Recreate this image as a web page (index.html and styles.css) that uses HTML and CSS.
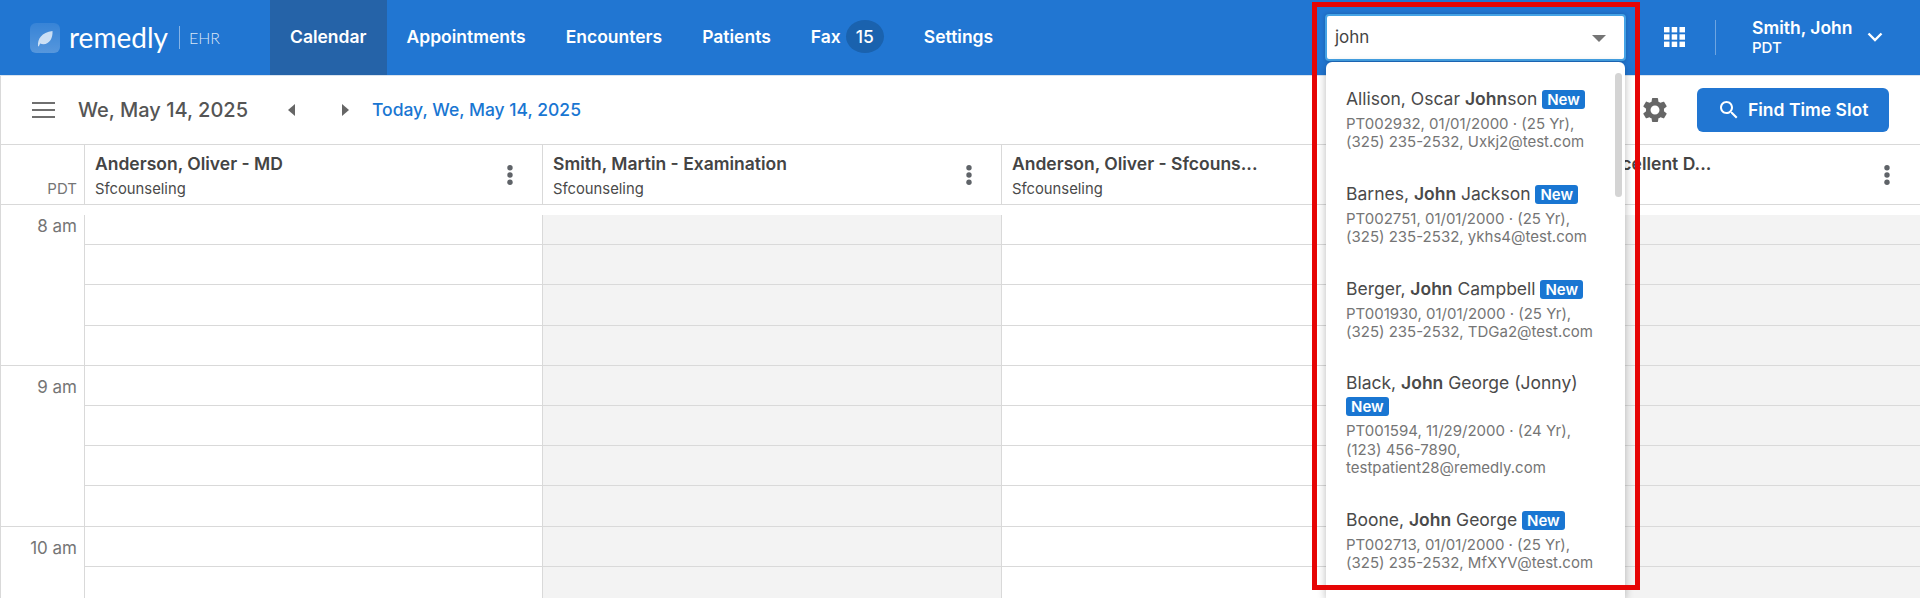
FILE: index.html
```html
<!DOCTYPE html>
<html lang="en">
<head>
<meta charset="utf-8">
<title>Remedly EHR Calendar</title>
<link rel="stylesheet" href="styles.css">
</head>
<body>
<header class="topbar">
  <div class="brand">
    <svg class="brand-mark" width="30" height="30" viewBox="0 0 30 30"><defs><linearGradient id="markBg" x1="0" y1="0" x2="0" y2="1"><stop offset="0" stop-color="#fff" stop-opacity=".1"/><stop offset="1" stop-color="#fff" stop-opacity=".24"/></linearGradient></defs><rect width="30" height="30" rx="6" fill="url(#markBg)"/><path d="M8 23c-.6-7 3.500-13.500 14.500-15 .5 7-3 13-9 13.300-1.300 0-2.300-.2-3.300-.7L8.700 23.400z" fill="#fff" fill-opacity=".72"/></svg>
    <span class="brand-name">remedly</span>
    <span class="brand-sep"></span>
    <span class="brand-ehr">EHR</span>
  </div>
  <nav class="nav">
    <a class="nav-item is-active">Calendar</a>
    <a class="nav-item">Appointments</a>
    <a class="nav-item">Encounters</a>
    <a class="nav-item">Patients</a>
    <a class="nav-item">Fax <span class="nav-badge">15</span></a>
    <a class="nav-item">Settings</a>
  </nav>
  <div class="search">
    <span class="search-value">john</span>
    <svg class="search-caret" width="14" height="7" viewBox="0 0 14 7"><path d="M0 0h14L7 7z" fill="#757575"/></svg>
    <div class="results">
      <span class="results-thumb"></span>
      <div class="result">
        <div class="result-name">Allison, Oscar <b>John</b>son <span class="tag">New</span></div>
        <div class="result-meta">PT002932, 01/01/2000 · (25 Yr), (325) 235-2532, Uxkj2@test.com</div>
      </div>
      <div class="result">
        <div class="result-name">Barnes, <b>John</b> Jackson <span class="tag">New</span></div>
        <div class="result-meta">PT002751, 01/01/2000 · (25 Yr), (325) 235-2532, ykhs4@test.com</div>
      </div>
      <div class="result">
        <div class="result-name">Berger, <b>John</b> Campbell <span class="tag">New</span></div>
        <div class="result-meta">PT001930, 01/01/2000 · (25 Yr), (325) 235-2532, TDGa2@test.com</div>
      </div>
      <div class="result">
        <div class="result-name">Black, <b>John</b> George (Jonny) <span class="tag">New</span></div>
        <div class="result-meta">PT001594, 11/29/2000 · (24 Yr), (123) 456-7890, testpatient28@remedly.com</div>
      </div>
      <div class="result">
        <div class="result-name">Boone, <b>John</b> George <span class="tag">New</span></div>
        <div class="result-meta">PT002713, 01/01/2000 · (25 Yr), (325) 235-2532, MfXYV@test.com</div>
      </div>
    </div>
  </div>
  <svg class="apps" width="21" height="20" viewBox="0 0 21 20" fill="#fff"><rect width="5.500" height="5.400"/><rect x="7.700" width="5.500" height="5.400"/><rect x="15.500" width="5.500" height="5.400"/><rect y="7.300" width="5.500" height="5.400"/><rect x="7.700" y="7.300" width="5.500" height="5.400"/><rect x="15.500" y="7.300" width="5.500" height="5.400"/><rect y="14.600" width="5.500" height="5.400"/><rect x="7.700" y="14.600" width="5.500" height="5.400"/><rect x="15.500" y="14.600" width="5.500" height="5.400"/></svg>
  <span class="top-sep"></span>
  <div class="user">
    <div class="user-name">Smith, John</div>
    <div class="user-zone">PDT</div>
  </div>
  <svg class="user-chevron" width="16" height="10" viewBox="0 0 16 10"><path d="M1.500 1.500L8 8l6.500-6.500" fill="none" stroke="#fff" stroke-width="2.400"/></svg>
</header>

<main class="page">
  <section class="toolbar">
    <svg class="menu-icon" width="23" height="16" viewBox="0 0 23 16" fill="#6f6f6f"><rect y="0" width="23" height="2"/><rect y="7" width="23" height="2"/><rect y="14" width="23" height="2"/></svg>
    <h1 class="date-title">We, May 14, 2025</h1>
    <svg class="arrow arrow-prev" width="7" height="12" viewBox="0 0 7 12"><path d="M7 0v12L0 6z" fill="#666"/></svg>
    <svg class="arrow arrow-next" width="7" height="12" viewBox="0 0 7 12"><path d="M0 0v12l7-6z" fill="#666"/></svg>
    <a class="today">Today, We, May 14, 2025</a>
    <svg class="gear" width="30" height="30" viewBox="0 0 24 24"><path fill="#666" d="M19.140 12.940c.04-.3.06-.61.06-.94 0-.32-.02-.64-.07-.94l2.030-1.580c.18-.14.23-.41.12-.61l-1.920-3.320c-.12-.22-.37-.29-.59-.22l-2.390.96c-.5-.38-1.030-.7-1.620-.94l-.36-2.540c-.04-.24-.24-.41-.48-.41h-3.840c-.24 0-.43.17-.47.41l-.36 2.540c-.59.24-1.130.57-1.620.94l-2.390-.96c-.22-.08-.47 0-.59.22L2.740 8.870c-.12.21-.08.47.12.61l2.030 1.580c-.05.3-.09.63-.09.94s.02.64.07.94l-2.030 1.580c-.18.14-.23.41-.12.61l1.920 3.320c.12.22.37.29.59.22l2.390-.96c.5.38 1.030.7 1.620.94l.36 2.540c.05.24.24.41.48.41h3.840c.24 0 .44-.17.47-.41l.36-2.540c.59-.24 1.130-.56 1.620-.94l2.390.96c.22.08.47 0 .59-.22l1.920-3.320c.12-.22.07-.47-.12-.61l-2.010-1.580zM12 15.600c-1.980 0-3.600-1.620-3.600-3.600s1.620-3.600 3.600-3.600 3.600 1.620 3.600 3.600-1.620 3.600-3.600 3.600z"/></svg>
    <button class="find-btn" type="button">
      <svg width="24" height="24" viewBox="0 0 24 24"><path fill="#fff" d="M15.500 14h-.79l-.28-.27C15.410 12.590 16 11.110 16 9.500 16 5.910 13.090 3 9.500 3S3 5.910 3 9.500 5.910 16 9.500 16c1.610 0 3.090-.59 4.230-1.570l.27.28v.79l5 4.990L20.490 19l-4.990-5zm-6 0C7.010 14 5 11.990 5 9.500S7.010 5 9.500 5 14 7.010 14 9.500 11.990 14 9.500 14z"/></svg>
      <span>Find Time Slot</span>
    </button>
  </section>

  <section class="col-heads">
    <div class="zone-cell">PDT</div>
    <div class="col-head">
      <div class="col-title">Anderson, Oliver - MD</div>
      <div class="col-sub">Sfcounseling</div>
      <svg class="dots" width="6" height="20" viewBox="0 0 6 20" fill="#5f6368"><circle cx="3" cy="2.700" r="2.700"/><circle cx="3" cy="10" r="2.700"/><circle cx="3" cy="17.300" r="2.700"/></svg>
    </div>
    <div class="col-head">
      <div class="col-title">Smith, Martin - Examination</div>
      <div class="col-sub">Sfcounseling</div>
      <svg class="dots" width="6" height="20" viewBox="0 0 6 20" fill="#5f6368"><circle cx="3" cy="2.700" r="2.700"/><circle cx="3" cy="10" r="2.700"/><circle cx="3" cy="17.300" r="2.700"/></svg>
    </div>
    <div class="col-head">
      <div class="col-title">Anderson, Oliver - Sfcouns...</div>
      <div class="col-sub">Sfcounseling</div>
      <svg class="dots" width="6" height="20" viewBox="0 0 6 20" fill="#5f6368"><circle cx="3" cy="2.700" r="2.700"/><circle cx="3" cy="10" r="2.700"/><circle cx="3" cy="17.300" r="2.700"/></svg>
    </div>
    <div class="col-head">
      <div class="col-title">Smith, Martin - Excellent D...</div>
      <svg class="dots" width="6" height="20" viewBox="0 0 6 20" fill="#5f6368"><circle cx="3" cy="2.700" r="2.700"/><circle cx="3" cy="10" r="2.700"/><circle cx="3" cy="17.300" r="2.700"/></svg>
    </div>
  </section>

  <section class="grid">
    <div class="hours">
      <div class="hour">8 am</div>
      <div class="hour">9 am</div>
      <div class="hour">10 am</div>
    </div>
    <div class="day">
      <div class="slot slot-first"></div><div class="slot"></div><div class="slot slot-hour"></div><div class="slot"></div><div class="slot"></div><div class="slot"></div><div class="slot slot-hour"></div><div class="slot"></div><div class="slot"></div>
    </div>
    <div class="day day-off">
      <div class="slot slot-first"></div><div class="slot"></div><div class="slot slot-hour"></div><div class="slot"></div><div class="slot"></div><div class="slot"></div><div class="slot slot-hour"></div><div class="slot"></div><div class="slot"></div>
    </div>
    <div class="day">
      <div class="slot slot-first"></div><div class="slot"></div><div class="slot slot-hour"></div><div class="slot"></div><div class="slot"></div><div class="slot"></div><div class="slot slot-hour"></div><div class="slot"></div><div class="slot"></div>
    </div>
    <div class="day day-off">
      <div class="slot slot-first"></div><div class="slot"></div><div class="slot slot-hour"></div><div class="slot"></div><div class="slot"></div><div class="slot"></div><div class="slot slot-hour"></div><div class="slot"></div><div class="slot"></div>
    </div>
  </section>
</main>
<div class="annotation"></div>
</body>
</html>
```
FILE: styles.css
```css
* { box-sizing: border-box; }
html, body { margin: 0; height: 598px; overflow: hidden; background: #fff; }
body { font-family: Inter, "Liberation Sans", sans-serif; color: #444; position: relative; }

.topbar { display: flex; align-items: center; height: 76px; background: #2176d2; border-bottom: 1px solid #d9e3ee; color: #fff; }
.brand { display: flex; align-items: center; width: 270px; height: 75px; padding-left: 30px; flex: none; }
.brand-mark { flex: none; }
.brand-name { font-family: Lato, sans-serif; font-size: 28px; line-height: 30px; margin-left: 9px; font-weight: 400; margin-top: -2px; }
.brand-sep { width: 1px; height: 23px; background: rgba(255,255,255,.45); margin-left: 11px; }
.brand-ehr { font-family: Lato, sans-serif; font-weight: 300; font-size: 16px; margin-left: 9px; color: rgba(255,255,255,.85); }
.nav { display: flex; height: 75px; }
.nav-item { display: flex; align-items: center; gap: 5px; padding: 0 20px 2px; font-size: 17.5px; font-weight: 600; line-height: 24px; }
.nav-item.is-active { background: #2563a8; }
.nav-badge { display: flex; align-items: center; justify-content: center; width: 38px; height: 33px; border-radius: 50%; background: #1a62ae; font-weight: 500; }

.search { position: relative; display: flex; align-items: center; justify-content: space-between; width: 301px; height: 47px; margin-left: auto; padding: 0 18px 0 8px; background: #fff; border: 2px solid #45a3e6; border-radius: 4px; box-shadow: 0 0 4px rgba(0,0,0,.2); }
.search-value { font-size: 17px; line-height: 22px; margin-top: -1px; color: #444; }
.search-caret { flex: none; margin-top: 2px; }
.results { position: absolute; left: -1px; top: 46px; width: 299px; height: 536px; padding: 10px 30px 0 0; background: #fff; border-radius: 6px 6px 0 0; box-shadow: 0 2px 8px rgba(0,0,0,.28); z-index: 5; overflow: hidden; }
.results-thumb { position: absolute; right: 3px; top: 11px; width: 7px; height: 124px; border-radius: 4px; background: #d4d4d4; }
.result { padding: 15px 0 15px 20px; }
.result-name { font-size: 17.5px; line-height: 23px; color: #4a4a4a; }
.result-name b { font-weight: 600; }
.result-meta { margin-top: 5px; font-size: 15px; line-height: 18.4px; color: #757575; }
.tag { display: inline-block; height: 19px; padding: 0 5px; border-radius: 3px; background: #1976d2; color: #fff; font-size: 15px; font-weight: 600; line-height: 19px; }

.apps { margin-left: 38px; flex: none; margin-top: -1px; }
.top-sep { width: 1px; height: 35px; margin-left: 30px; background: rgba(255,255,255,.35); margin-top: -1px; }
.user { margin-left: 36px; width: 115px; }
.user-name { font-size: 17.5px; font-weight: 600; line-height: 20px; }
.user-zone { font-size: 15px; font-weight: 500; line-height: 20px; }
.user-chevron { flex: none; margin-right: 37px; margin-top: -1px; }

.page { border-left: 1px solid #d9d9d9; }
.toolbar { display: flex; align-items: center; height: 69px; border-bottom: 1px solid #d9d9d9; padding-left: 31px; padding-bottom: 1px; }
.menu-icon { flex: none; }
.date-title { margin: 0 0 0 23px; font-size: 20px; font-weight: 500; line-height: 24px; color: #555; }
.arrow-prev { margin-left: 40px; }
.arrow-next { margin-left: 47px; }
.today { margin-left: 23px; font-size: 17.5px; font-weight: 500; color: #1976d2; }
.gear { margin-left: auto; flex: none; }
.find-btn { display: flex; align-items: center; gap: 7px; height: 44px; width: 192px; margin-left: 27px; margin-right: 31px; padding: 0 0 0 20px; border: 0; border-radius: 6px; background: #2176d2; color: #fff; font-family: inherit; font-size: 17.5px; font-weight: 600; }

.col-heads { display: grid; grid-template-columns: 83px 458px 459px 459px 1fr; height: 60px; border-bottom: 1px solid #d9d9d9; }
.zone-cell { display: flex; align-items: flex-end; justify-content: flex-end; padding: 0 7px 6px 0; font-size: 15px; line-height: 18px; color: #757575; }
.col-head { position: relative; border-left: 1px solid #d9d9d9; padding: 8px 0 0 10px; }
.col-title { font-size: 17.5px; font-weight: 600; line-height: 22px; color: #444; white-space: nowrap; }
.col-sub { margin-top: 5px; font-size: 14.8px; line-height: 18px; color: #4a4a4a; }
.dots { position: absolute; right: 29px; top: 20px; }
.col-head:last-child .dots { right: 30px; }

.grid { display: grid; grid-template-columns: 83px 458px 459px 459px 1fr; height: 393px; overflow: hidden; }
.hour { height: 161px; border-bottom: 1px solid #d9d9d9; padding: 10px 7px 0 0; text-align: right; font-size: 17px; line-height: 22px; color: #757575; }
.day { margin-top: 10px; border-left: 1px solid #d9d9d9; background: #fff; }
.day-off { background: #f3f3f3; }
.slot { height: 40px; border-bottom: 1px solid #d9d9d9; }
.slot-first { height: 30px; }
.slot-hour { height: 81px; background: linear-gradient(transparent 40px, #d9d9d9 40px, #d9d9d9 41px, transparent 41px); }

.annotation { position: absolute; left: 1312px; top: 2px; width: 328px; height: 588px; border: 5px solid #e60505; z-index: 10; pointer-events: none; }
```
